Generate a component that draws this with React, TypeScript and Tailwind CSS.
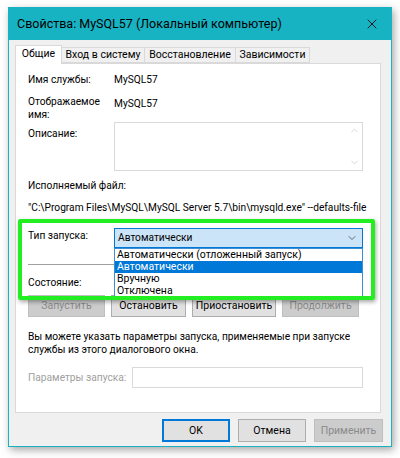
import { ChevronDown, ChevronUp, X } from "lucide-react";

const font = { fontFamily: 'Roboto, "Noto Sans", sans-serif' };

function Btn({
  label,
  disabled,
  primary,
  className = "",
}: {
  label: string;
  disabled?: boolean;
  primary?: boolean;
  className?: string;
}) {
  return (
    <div
      className={
        "flex h-[22px] items-center justify-center whitespace-nowrap border text-[10.5px] " +
        (disabled
          ? "border-[#bfbfbf] bg-[#cccccc] text-[#8a8a8a] "
          : primary
            ? "border-[#0078d7] bg-[#e1e1e1] text-black shadow-[inset_0_0_0_1px_#0078d7] "
            : "border-[#adadad] bg-[#e1e1e1] text-black ") +
        className
      }
    >
      {label}
    </div>
  );
}

export default function App() {
  return (
    <div className="h-[458px] w-[400px] bg-white pl-[8px] pt-[7px]" style={font}>
      <div className="flex h-[440px] w-[384px] flex-col border border-[#18b3c3] bg-[#f0f0f0] shadow-[2px_3px_8px_rgba(0,0,0,0.35)]">
        {/* title bar */}
        <div className="flex h-[32px] items-center justify-between bg-[#18b3c3] pl-[8px] pr-[11px]">
          <span className="whitespace-nowrap text-[12.5px] text-black">Свойства: MySQL57 (Локальный компьютер)</span>
          <X size={16} strokeWidth={1.3} className="text-black" />
        </div>

        {/* tabs */}
        <div className="mt-[4px] flex h-[19px] items-end whitespace-nowrap pl-[6px] text-[10.5px] leading-none">
          <div className="relative z-10 -mb-px flex h-[19px] w-[47px] items-center justify-center border border-b-0 border-[#d9d9d9] bg-white pb-[1px]">
            Общие
          </div>
          <div className="flex h-[16px] w-[83px] items-center justify-center border border-l-0 border-[#d9d9d9] bg-[#f0f0f0]">
            Вход в систему
          </div>
          <div className="flex h-[16px] w-[91px] items-center justify-center border border-l-0 border-[#d9d9d9] bg-[#f0f0f0]">
            Восстановление
          </div>
          <div className="flex h-[16px] w-[74px] items-center justify-center border border-l-0 border-[#d9d9d9] bg-[#f0f0f0]">
            Зависимости
          </div>
        </div>

        {/* tab panel */}
        <div className="relative ml-[6px] h-[350px] w-[366px] whitespace-nowrap border border-[#d9d9d9] bg-white pl-[12px] pt-[8px] text-[10.2px] text-black">
          <div className="flex h-[15px] leading-[15px]">
            <div className="w-[86px]">Имя службы:</div>
            <div>MySQL57</div>
          </div>
          <div className="mt-[8px] flex leading-[13px]">
            <div className="w-[86px]">
              Отображаемое
              <br />
              имя:
            </div>
            <div className="pt-[2px]">MySQL57</div>
          </div>
          <div className="mt-[1px] flex">
            <div className="w-[86px] pt-[4px] leading-[15px]">Описание:</div>
            <div className="flex h-[49px] w-[249px] justify-end border border-[#d9d9d9]">
              <div className="flex flex-col justify-between py-[2px] pr-[2px] text-[#c4c4c4]">
                <ChevronUp size={11} strokeWidth={1.5} />
                <ChevronDown size={11} strokeWidth={1.5} />
              </div>
            </div>
          </div>
          <div className="mt-[7px] leading-[15px]">Исполняемый файл:</div>
          <div className="mt-[7px] leading-[15px]">
            "C:\Program Files\MySQL\MySQL Server 5.7\bin\mysqld.exe" --defaults-file
          </div>

          {/* startup type */}
          <div className="mt-[13px] flex h-[20px]">
            <div className="w-[86px] leading-[15px]">Тип запуска:</div>
            <div className="flex h-[20px] w-[249px] items-center justify-between border border-[#0078d7] bg-[#cce4f7] pl-[3px] pr-[4px]">
              <span>Автоматически</span>
              <ChevronDown size={12} strokeWidth={1.4} className="text-[#333]" />
            </div>
          </div>
          <div className="mt-[16px] h-px w-[335px] bg-[#a0a0a0]" />
          <div className="mt-[10px] leading-[15px]">Состояние:</div>
          <div className="mt-[5px] flex gap-[6px]">
            <Btn label="Запустить" disabled className="w-[77px]" />
            <Btn label="Остановить" className="w-[75px]" />
            <Btn label="Приостановить" className="w-[84px]" />
            <Btn label="Продолжить" disabled className="w-[77px]" />
          </div>
          <div className="mt-[13px] leading-[13px]">
            Вы можете указать параметры запуска, применяемые при запуске
            <br />
            службы из этого диалогового окна.
          </div>
          <div className="mt-[11px] flex items-center">
            <div className="w-[104px] text-[#a0a0a0]">Параметры запуска:</div>
            <div className="h-[21px] w-[231px] border border-[#d9d9d9]" />
          </div>

          {/* open dropdown list */}
          <div className="absolute left-[98px] top-[184px] z-20 w-[249px] border border-[#3e8ed6] bg-white text-[10.5px] leading-[12px]">
            <div className="h-[12px] pl-[2px]">Автоматически (отложенный запуск)</div>
            <div className="h-[12px] bg-[#0078d7] pl-[2px] text-white">Автоматически</div>
            <div className="h-[12px] pl-[2px]">Вручную</div>
            <div className="h-[12px] pl-[2px]">Отключена</div>
          </div>

          {/* green highlight */}
          <div className="pointer-events-none absolute left-[2px] top-[155px] z-30 h-[81px] w-[357px] rounded-[2px] border-[4px] border-[#22ee22] shadow-[1px_2px_4px_rgba(0,0,0,0.35)]" />
        </div>

        {/* dialog buttons */}
        <div className="mt-[6px] flex justify-end gap-[8px] pr-[8px]">
          <Btn label="OK" primary className="h-[23px] w-[68px]" />
          <Btn label="Отмена" className="h-[23px] w-[68px]" />
          <Btn label="Применить" disabled className="h-[23px] w-[69px]" />
        </div>
      </div>
    </div>
  );
}
